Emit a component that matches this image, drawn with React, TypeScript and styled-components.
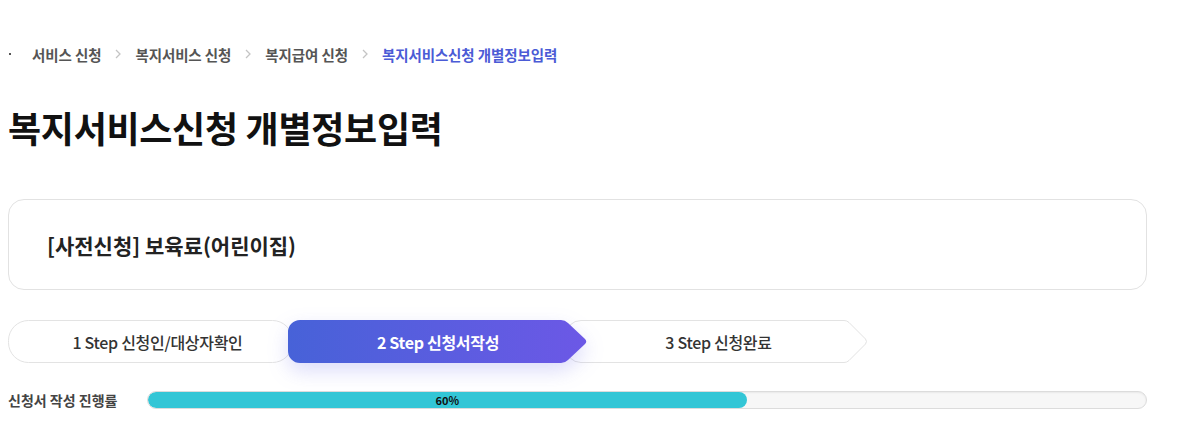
import React from "react";
import styled, { createGlobalStyle } from "styled-components";

const Global = createGlobalStyle`
  html, body { margin: 0; padding: 0; background: #fff; }
  body { font-family: "Noto Sans CJK KR", "Noto Sans", sans-serif; color: #222; }
`;

const Page = styled.div`
  width: 1139px;
  padding: 40px 0 0 8px;
`;

const Breadcrumb = styled.nav`
  display: flex;
  align-items: center;
  height: 28px;
  font-size: 14.5px;
  font-weight: 700;
  color: #555;
`;

const Dot = styled.span`
  width: 2px;
  height: 2px;
  background: #555;
  margin: 0 21px 0 1px;
`;

const Crumb = styled.span<{ $active?: boolean }>`
  color: ${(p) => (p.$active ? "#4b5bd6" : "#555")};
  letter-spacing: -0.1px;
`;

const Chevron = styled.svg`
  margin: 0 14px 0 14px;
  flex: none;
`;

const Title = styled.h1`
  margin: 34px 0 0;
  font-size: 36px;
  line-height: 50px;
  font-weight: 700;
  color: #111;
  letter-spacing: -0.3px;
`;

const Card = styled.section`
  margin-top: 47px;
  height: 89px;
  border: 1px solid #e2e2e2;
  border-radius: 16px;
  display: flex;
  align-items: center;
  padding: 0 38px;
`;

const CardTitle = styled.h2`
  margin: 0;
  font-size: 21px;
  font-weight: 700;
  color: #222;
  letter-spacing: 0;
`;

const Steps = styled.ol`
  list-style: none;
  margin: 30px 0 0;
  padding: 0;
  display: flex;
  height: 43px;
`;

const Step = styled.li<{ $w: number; $overlap: number; $z: number }>`
  position: relative;
  width: ${(p) => p.$w}px;
  height: 43px;
  margin-left: ${(p) => -p.$overlap}px;
  z-index: ${(p) => p.$z};
  display: flex;
  align-items: center;
  justify-content: center;
  flex: none;
`;

const Shape = styled.svg<{ $shadow?: boolean }>`
  position: absolute;
  left: 0;
  top: 0;
  filter: ${(p) => (p.$shadow ? "drop-shadow(0 8px 10px rgba(95, 95, 230, 0.22))" : "none")};
`;

const StepLabel = styled.span<{ $active?: boolean; $shift: number }>`
  position: relative;
  font-size: 16px;
  font-weight: ${(p) => (p.$active ? 700 : 500)};
  color: ${(p) => (p.$active ? "#fff" : "#333")};
  letter-spacing: -0.3px;
  margin-left: ${(p) => p.$shift}px;
`;

const ProgressRow = styled.div`
  margin-top: 27px;
  display: flex;
  align-items: center;
`;

const ProgressLabel = styled.span`
  width: 139px;
  flex: none;
  font-size: 14px;
  line-height: 20px;
  font-weight: 700;
  color: #444;
`;

const Track = styled.div`
  flex: 1;
  height: 16px;
  border: 1px solid #dcdcdc;
  border-radius: 9px;
  background: #f7f7f7;
  overflow: hidden;
  box-shadow: inset 0 1px 2px rgba(0, 0, 0, 0.06);
`;

const Fill = styled.div`
  height: 100%;
  background: #33c6d6;
  border-radius: 9px;
  display: flex;
  align-items: center;
  justify-content: center;
  font-size: 11px;
  font-weight: 700;
  color: #111;
`;

const ChevronIcon = () => (
  <Chevron width="6" height="10" viewBox="0 0 6 10">
    <path d="M1 1 L5 5 L1 9" fill="none" stroke="#c4c4c4" strokeWidth="1.3" />
  </Chevron>
);

const crumbs = ["서비스 신청", "복지서비스 신청", "복지급여 신청", "복지서비스신청 개별정보입력"];

export default function App() {
  const pct = 60;
  return (
    <>
      <Global />
      <Page>
        <Breadcrumb>
          <Dot />
          {crumbs.map((c, i) => (
            <React.Fragment key={c}>
              {i > 0 && <ChevronIcon />}
              <Crumb $active={i === crumbs.length - 1}>{c}</Crumb>
            </React.Fragment>
          ))}
        </Breadcrumb>

        <Title>복지서비스신청 개별정보입력</Title>

        <Card>
          <CardTitle>[사전신청] 보육료(어린이집)</CardTitle>
        </Card>

        <Steps>
          <Step $w={285} $overlap={0} $z={1}>
            <Shape width="285" height="43" viewBox="0 0 285 43">
              <rect x="0.5" y="0.5" width="284" height="42" rx="20" fill="#fff" stroke="#e3e3e3" />
            </Shape>
            <StepLabel $shift={14}>1 Step 신청인/대상자확인</StepLabel>
          </Step>
          <Step $w={300} $overlap={5} $z={3}>
            <Shape width="300" height="43" viewBox="0 0 300 43" $shadow>
              <defs>
                <linearGradient id="stepGrad" x1="0" y1="0" x2="1" y2="0">
                  <stop offset="0" stopColor="#4762d8" />
                  <stop offset="1" stopColor="#6c58e6" />
                </linearGradient>
              </defs>
              <path
                d="M12 0 H273 Q277 0 280 3 L297 19 Q299.5 21.5 297 24 L280 40 Q277 43 273 43 H12 A12 12 0 0 1 0 31 V12 A12 12 0 0 1 12 0 Z"
                fill="url(#stepGrad)"
              />
            </Shape>
            <StepLabel $active $shift={0}>2 Step 신청서작성</StepLabel>
          </Step>
          <Step $w={303} $overlap={23} $z={2}>
            <Shape width="303" height="43" viewBox="0 0 303 43">
              <path
                d="M16 0.5 H279 Q282 0.5 284 2.5 L300.5 19 Q302.5 21.5 300.5 24 L284 40.5 Q282 42.5 279 42.5 H16 A15.5 15.5 0 0 1 0.5 27 V16 A15.5 15.5 0 0 1 16 0.5 Z"
                fill="#fff"
                stroke="#e3e3e3"
              />
            </Shape>
            <StepLabel $shift={4}>3 Step 신청완료</StepLabel>
          </Step>
        </Steps>

        <ProgressRow>
          <ProgressLabel>신청서 작성 진행률</ProgressLabel>
          <Track>
            <Fill style={{ width: `${pct}%` }}>{pct}%</Fill>
          </Track>
        </ProgressRow>
      </Page>
    </>
  );
}
